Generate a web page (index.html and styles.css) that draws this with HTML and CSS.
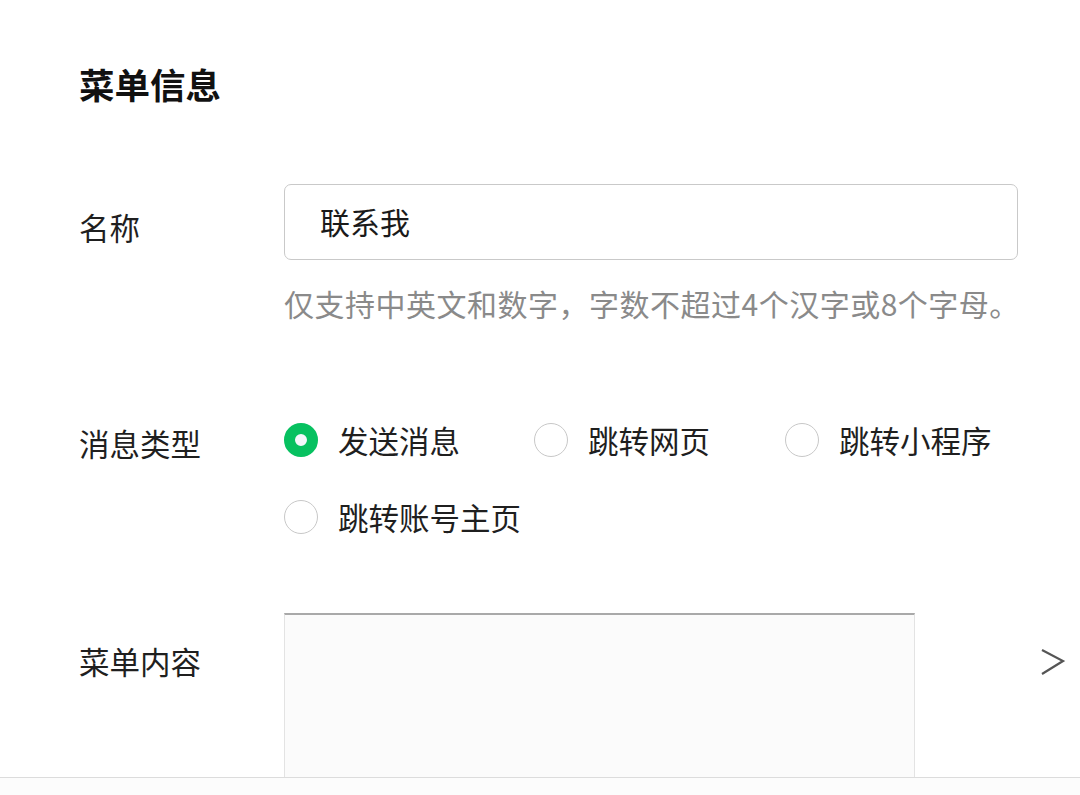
FILE: index.html
```html
<!DOCTYPE html>
<html lang="zh-CN">
<head>
<meta charset="utf-8">
<link rel="stylesheet" href="styles.css">
</head>
<body>
<div class="page">
  <h1 class="title">菜单信息</h1>

  <div class="row row-name">
    <div class="label label-name">名称</div>
    <div class="field">
      <div class="input">联系我</div>
      <div class="hint">仅支持中英文和数字，字数不超过4个汉字或8个字母。</div>
    </div>
  </div>

  <div class="row row-type">
    <div class="label label-type">消息类型</div>
    <div class="radios">
      <div class="radio checked"><span class="dot"></span><span class="rtext">发送消息</span></div>
      <div class="radio"><span class="dot"></span><span class="rtext">跳转网页</span></div>
      <div class="radio"><span class="dot"></span><span class="rtext">跳转小程序</span></div>
      <div class="radio"><span class="dot"></span><span class="rtext">跳转账号主页</span></div>
    </div>
  </div>

  <div class="row row-content">
    <div class="label label-content">菜单内容</div>
    <div class="content-box"></div>
    <div class="chev">
      <svg width="26" height="30" viewBox="0 0 26 30"><path d="M2 3 L23 14 L2 27" fill="none" stroke="#555" stroke-width="2.2" stroke-linejoin="miter"/></svg>
    </div>
  </div>
</div>
<div class="bottom-line"></div>
</body>
</html>
```
FILE: styles.css
```css
html, body {
  margin: 0;
  padding: 0;
  background: #ffffff;
}
body {
  width: 1080px;
  height: 795px;
  overflow: hidden;
  position: relative;
  font-family: "Noto Sans CJK SC", "Noto Sans", sans-serif;
  color: #1f1f1f;
}
.page {
  padding-left: 79px;
  padding-top: 62px;
}
.title {
  margin: 0;
  font-size: 35.5px;
  line-height: 44px;
  font-weight: 700;
  color: #111;
}
.row {
  display: flex;
  align-items: flex-start;
}
.label {
  width: 205px;
  flex: none;
  font-size: 30.5px;
  line-height: 40px;
}
.row-name {
  margin-top: 78px;
}
.label-name {
  padding-top: 23px;
}
.field {
  width: 734px;
}
.input {
  box-sizing: border-box;
  height: 76px;
  border: 1px solid #c9c9c9;
  border-radius: 7px;
  padding-left: 35px;
  font-size: 30px;
  line-height: 72px;
  color: #1a1a1a;
}
.hint {
  margin-top: 23px;
  font-size: 30px;
  line-height: 40px;
  letter-spacing: 0.5px;
  color: #8a8a8a;
  white-space: nowrap;
}
.row-type {
  margin-top: 97px;
}
.label-type {
  padding-top: 3px;
}
.radios {
  display: grid;
  grid-template-columns: 250px 251px 250px;
  row-gap: 37px;
}
.radio {
  display: flex;
  align-items: center;
  height: 40px;
}
.dot {
  box-sizing: border-box;
  width: 34px;
  height: 34px;
  border-radius: 50%;
  border: 1px solid #c8c8c8;
  flex: none;
  margin-right: 20px;
}
.radio.checked .dot {
  border: 11.5px solid #07c160;
  background: #f4f7fb;
}
.rtext {
  font-size: 30.5px;
  line-height: 40px;
  white-space: nowrap;
}
.row-content {
  margin-top: 76px;
}
.label-content {
  padding-top: 28px;
}
.content-box {
  box-sizing: border-box;
  width: 631px;
  height: 164px;
  border-top: 2px solid #a9a9a9;
  border-left: 1px solid #e3e3e3;
  border-right: 1px solid #e3e3e3;
  background: #fbfbfb;
  flex: none;
}
.chev {
  margin-left: 125px;
  padding-top: 34px;
}
.bottom-line {
  position: absolute;
  left: 0;
  right: 0;
  top: 777px;
  height: 18px;
  border-top: 1px solid #dcdcdc;
  background: #fcfcfc;
}
```
